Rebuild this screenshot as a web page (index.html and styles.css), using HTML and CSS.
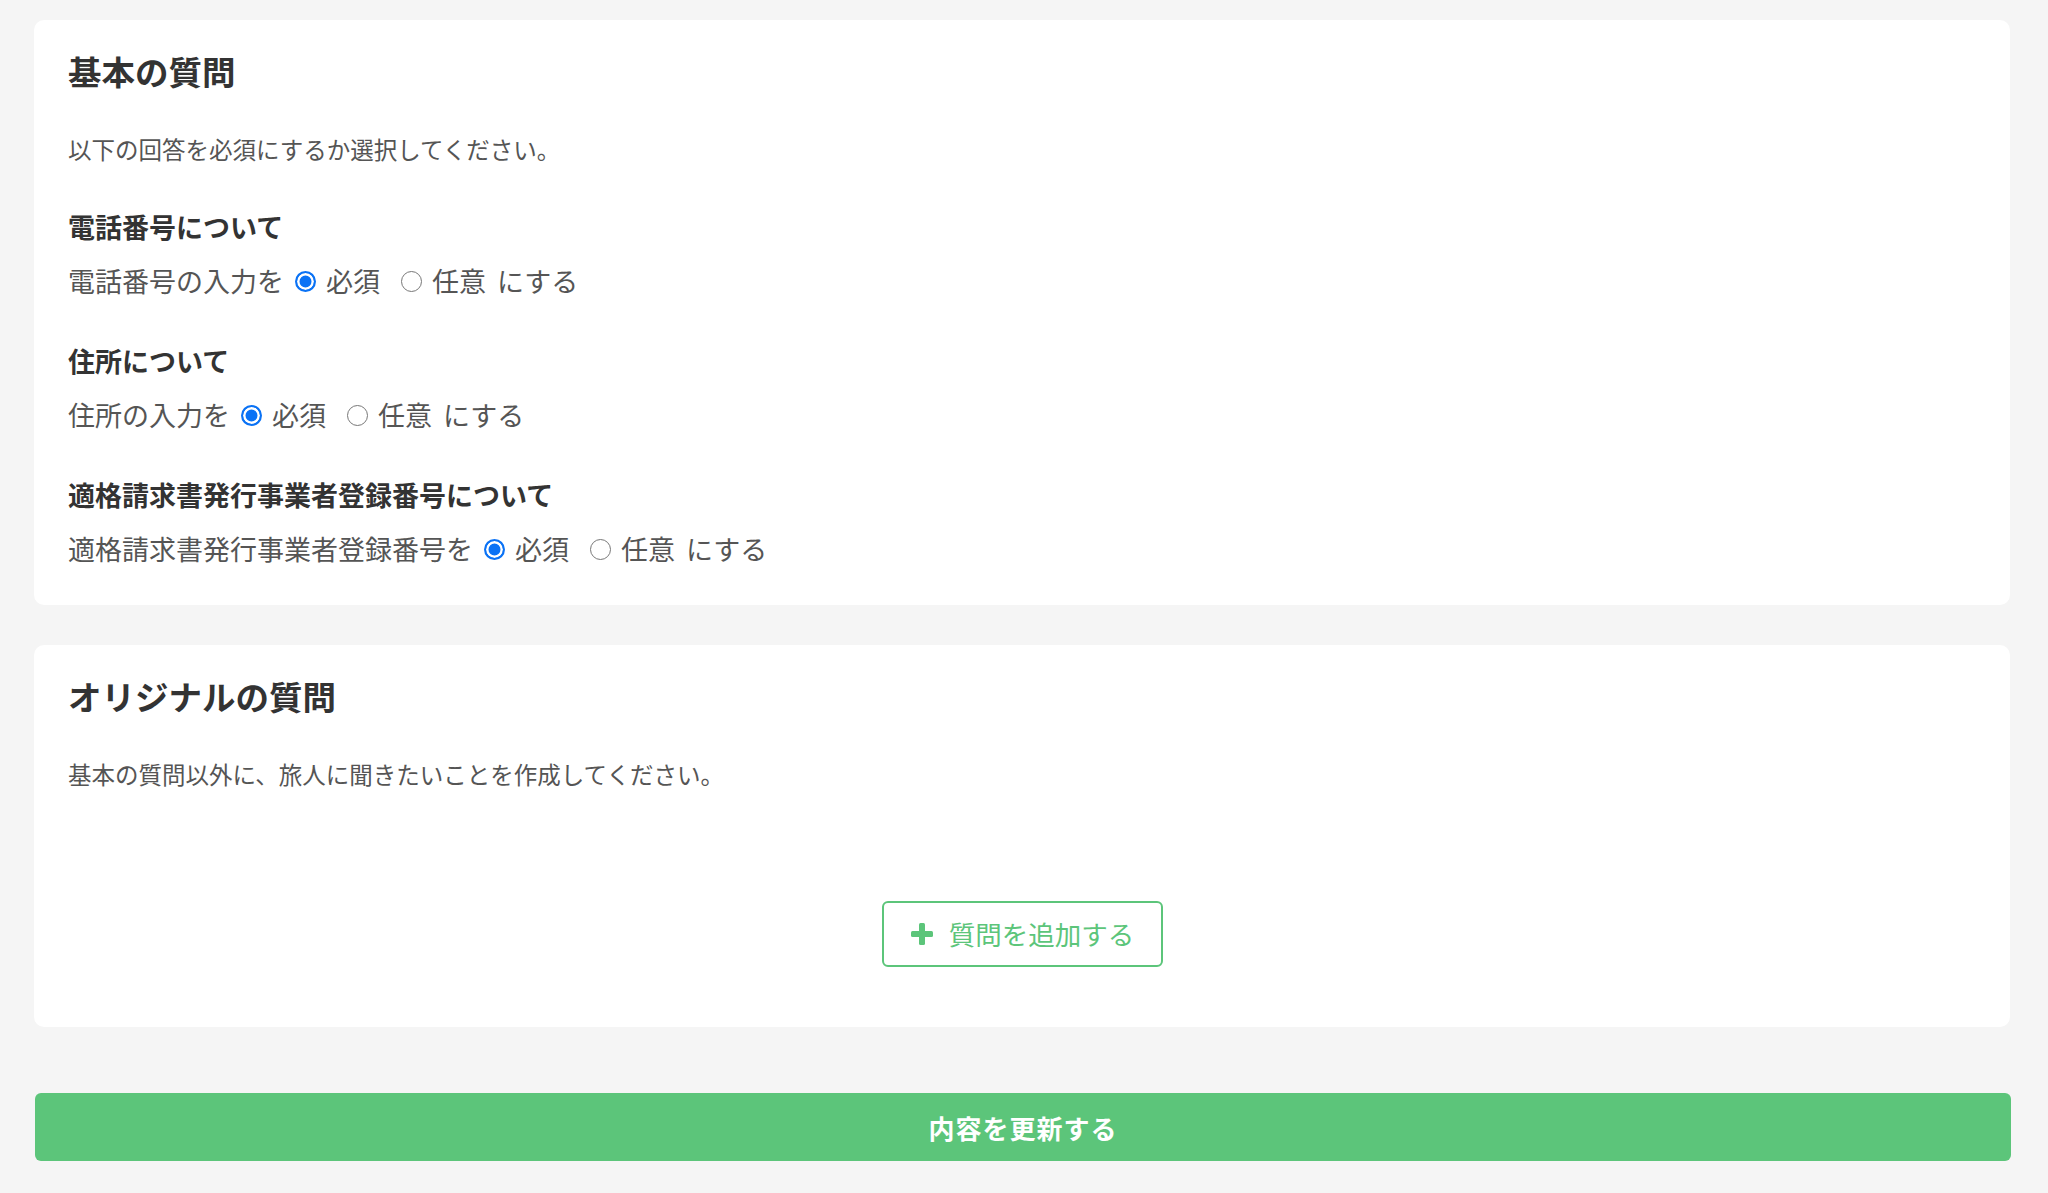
FILE: index.html
```html
<!DOCTYPE html>
<html lang="ja">
<head>
    <meta charset="UTF-8">
    <meta name="viewport" content="width=device-width, initial-scale=1.0">
    <link rel="stylesheet" href="styles.css">
    <title>質問の設定</title>
</head>
<body>
    <div class="container">
        <section class="card">
            <h2 class="card-title">基本の質問</h2>
            <p class="card-desc">以下の回答を必須にするか選択してください。</p>

            <div class="question">
                <h3 class="question-title">電話番号について</h3>
                <div class="choice">
                    <span>電話番号の入力を</span>
                    <label class="radio"><input type="radio" name="tel" value="required" checked><span>必須</span></label>
                    <label class="radio"><input type="radio" name="tel" value="optional"><span>任意</span></label>
                    <span class="suffix">にする</span>
                </div>
            </div>

            <div class="question">
                <h3 class="question-title">住所について</h3>
                <div class="choice">
                    <span>住所の入力を</span>
                    <label class="radio"><input type="radio" name="address" value="required" checked><span>必須</span></label>
                    <label class="radio"><input type="radio" name="address" value="optional"><span>任意</span></label>
                    <span class="suffix">にする</span>
                </div>
            </div>

            <div class="question">
                <h3 class="question-title">適格請求書発行事業者登録番号について</h3>
                <div class="choice">
                    <span>適格請求書発行事業者登録番号を</span>
                    <label class="radio"><input type="radio" name="invoice" value="required" checked><span>必須</span></label>
                    <label class="radio"><input type="radio" name="invoice" value="optional"><span>任意</span></label>
                    <span class="suffix">にする</span>
                </div>
            </div>
        </section>

        <section class="card card-original">
            <h2 class="card-title">オリジナルの質問</h2>
            <p class="card-desc">基本の質問以外に、旅人に聞きたいことを作成してください。</p>

            <div class="add-area">
                <button type="button" class="add-button">
                    <svg class="plus-icon" width="24" height="24" viewBox="0 0 24 24">
                        <rect x="9" y="1" width="6" height="22" rx="1.5" fill="currentColor"/>
                        <rect x="1" y="9" width="22" height="6" rx="1.5" fill="currentColor"/>
                    </svg>
                    <span>質問を追加する</span>
                </button>
            </div>
        </section>

        <button type="button" class="submit-button">内容を更新する</button>
    </div>
</body>
</html>
```

FILE: styles.css
```css
body {
    margin: 0;
    padding: 0;
    background-color: #f5f5f5;
    font-family: "Noto Sans CJK JP", "Noto Sans", sans-serif;
    color: #555;
}

.container {
    margin: 0 38px 0 34px;
    padding: 20px 0 32px;
}

.card {
    background-color: #fff;
    border-radius: 10px;
    padding: 25px 34px 36px;
}

.card + .card {
    margin-top: 40px;
}

.card-title {
    margin: 0;
    font-size: 33.5px;
    line-height: 52px;
    font-weight: 700;
    color: #333;
}

.card-desc {
    margin: 34px 0 0;
    font-size: 23.5px;
    line-height: 36px;
    color: #555;
}

.question {
    margin-top: 40px;
}

.question-title {
    margin: 0;
    font-size: 27px;
    line-height: 40px;
    font-weight: 700;
    color: #333;
}

.choice {
    display: flex;
    align-items: center;
    margin-top: 14px;
    font-size: 27px;
    line-height: 40px;
    color: #555;
}

.radio {
    display: inline-flex;
    align-items: center;
    margin-left: 11px;
    cursor: pointer;
}

.radio + .radio {
    margin-left: 21px;
}

.radio input {
    appearance: none;
    -webkit-appearance: none;
    width: 21px;
    height: 21px;
    margin: 0 10px 0 0;
    border: 1.5px solid #777;
    border-radius: 50%;
    background-color: #fff;
    box-sizing: border-box;
}

.radio input:checked {
    border: 2px solid #0a72f5;
    background-color: #0a72f5;
    box-shadow: inset 0 0 0 2.5px #fff;
}

.suffix {
    margin-left: 11px;
}

.card-original {
    padding-bottom: 60px;
}

.add-area {
    display: flex;
    justify-content: center;
    margin-top: 109px;
}

.add-button {
    display: flex;
    align-items: center;
    justify-content: center;
    gap: 15px;
    width: 281px;
    height: 66px;
    padding: 0;
    box-sizing: border-box;
    background-color: #fff;
    border: 2px solid #5cc57a;
    border-radius: 6px;
    color: #5cc57a;
    font-family: inherit;
    font-size: 26.5px;
    line-height: 40px;
    white-space: nowrap;
    cursor: pointer;
}

.plus-icon {
    flex-shrink: 0;
}

.submit-button {
    display: block;
    width: 100%;
    height: 68px;
    margin-top: 66px;
    margin-left: 1px;
    background-color: #5cc57a;
    border: none;
    border-radius: 6px;
    color: #fff;
    font-family: inherit;
    font-size: 26px;
    font-weight: 700;
    letter-spacing: 1px;
    cursor: pointer;
}
```
